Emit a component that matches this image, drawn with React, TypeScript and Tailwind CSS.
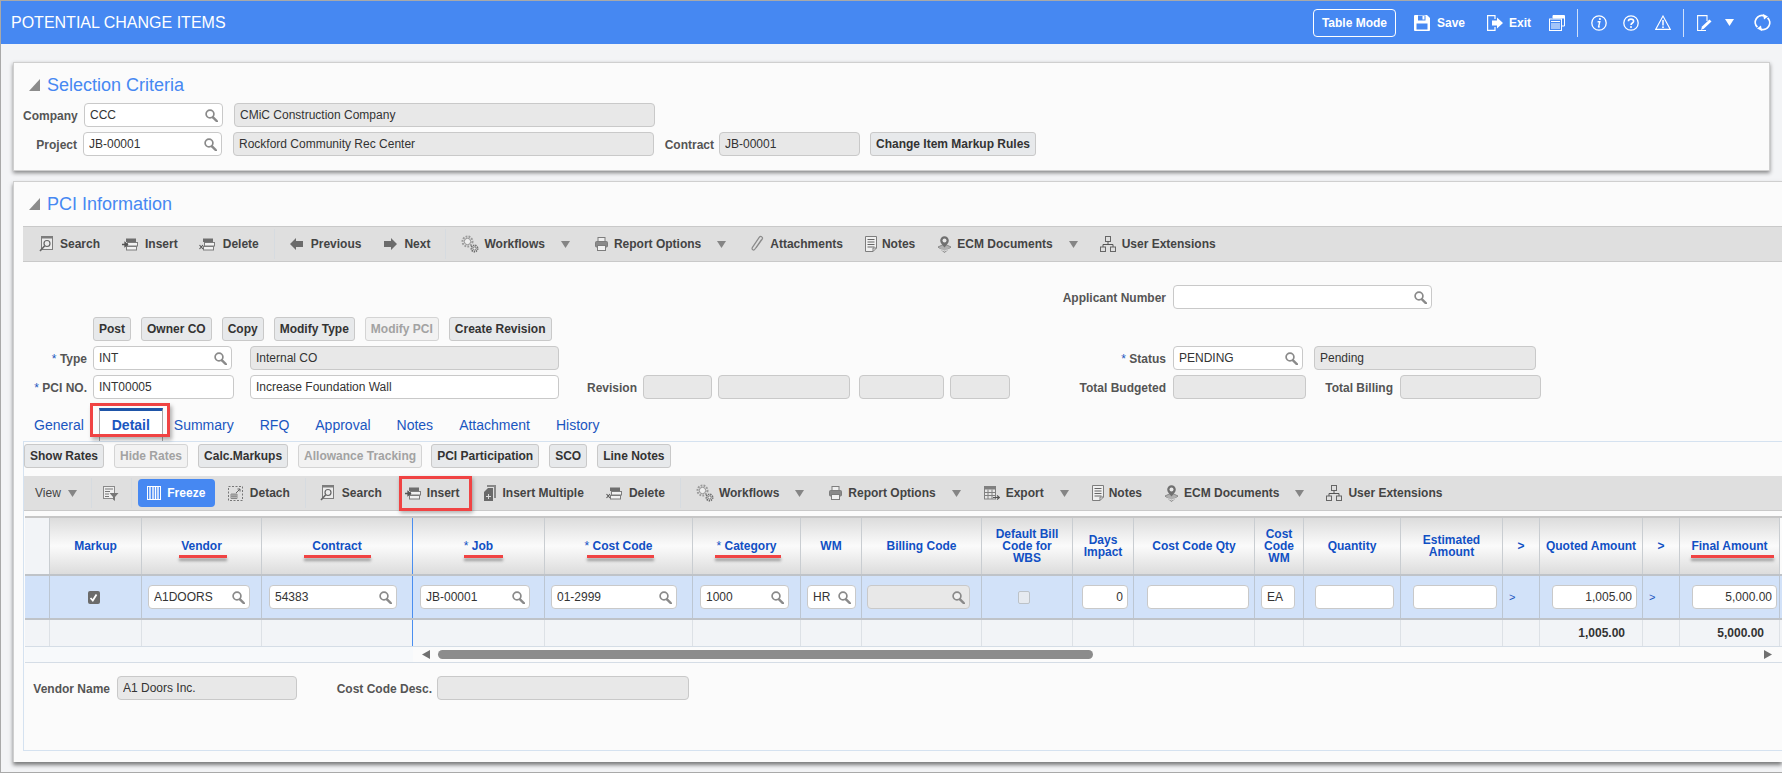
import type { ReactNode } from "react";

const GRID =
  "grid grid-cols-[25px_92px_120px_151px_132px_148px_108px_61px_120px_91px_61px_121px_49px_97px_102px_37px_103px_37px_100px]";

const GRAY = "#7d7d7d";

function Magnifier() {
  return (
    <svg width="13" height="13" viewBox="0 0 13 13" fill="none" className="shrink-0">
      <circle cx="5" cy="5" r="3.9" stroke="#8a8a8a" strokeWidth="1.7" fill="#ffffff" fillOpacity="0.4" />
      <path d="M8 8.3 L12 12.3" stroke="#8a8a8a" strokeWidth="2.4" strokeLinecap="round" />
    </svg>
  );
}

function DownArrow({ color = "#858585", className = "" }: { color?: string; className?: string }) {
  return (
    <svg width="9" height="7" viewBox="0 0 9 7" className={`shrink-0 ${className}`}>
      <polygon points="0,0 9,0 4.5,7" fill={color} />
    </svg>
  );
}

function SearchDocIcon() {
  return (
    <svg width="14" height="16" viewBox="0 0 14 16" fill="none" className="shrink-0">
      <rect x="2.5" y="0.5" width="11" height="13" fill="#ececec" stroke={GRAY} />
      <rect x="2.5" y="0.5" width="11" height="2" fill={GRAY} />
      <circle cx="8" cy="7.5" r="3" stroke="#666" strokeWidth="1.2" />
      <path d="M5.7 9.8 L1 15" stroke="#666" strokeWidth="1.6" />
    </svg>
  );
}

function RowsIcon({ kind }: { kind: "insert" | "delete" }) {
  return (
    <svg width="16" height="13" viewBox="0 0 16 13" fill="none" className="shrink-0">
      <rect x="4" y="0.5" width="10" height="3.5" fill="#6e6e6e" />
      <rect x="5.5" y="4.5" width="10" height="3.5" fill="#f2f2f2" stroke={GRAY} />
      <rect x="4.5" y="8.5" width="10" height="3.5" fill="#f2f2f2" stroke={GRAY} />
      {kind === "insert" ? (
        <path d="M0 6.5 H4 M3 4.5 L5.5 6.5 L3 8.5 Z" stroke="#555" strokeWidth="1.3" fill="#555" />
      ) : (
        <path d="M0.5 7 L4 11 M4 7 L0.5 11" stroke="#555" strokeWidth="1.1" />
      )}
    </svg>
  );
}

function BlockArrow({ dir }: { dir: "left" | "right" }) {
  return (
    <svg width="13" height="12" viewBox="0 0 13 12" className="shrink-0">
      <polygon
        points={dir === "left" ? "0,6 6,0 6,3 13,3 13,9 6,9 6,12" : "13,6 7,0 7,3 0,3 0,9 7,9 7,12"}
        fill="#6b6b6b"
      />
    </svg>
  );
}

function GearsIcon() {
  return (
    <svg width="18" height="18" viewBox="0 0 18 18" fill="none" className="shrink-0">
      <circle cx="6.5" cy="6.5" r="5" stroke="#9a9a9a" strokeWidth="2" strokeDasharray="1.8 1.2" />
      <circle cx="6.5" cy="6.5" r="3.2" stroke="#8a8a8a" strokeWidth="0.9" fill="#eee" />
      <circle cx="13.5" cy="13.5" r="3.2" stroke="#666" strokeWidth="1.6" strokeDasharray="1.3 0.9" />
      <circle cx="13.5" cy="13.5" r="1.6" stroke="#666" strokeWidth="0.8" fill="#eee" />
    </svg>
  );
}

function PrinterIcon() {
  return (
    <svg width="13" height="14" viewBox="0 0 13 14" fill="none" className="shrink-0">
      <rect x="3" y="0.5" width="7" height="4" fill="#eee" stroke={GRAY} />
      <rect x="0.5" y="4.5" width="12" height="5.5" rx="1" fill="#8a8a8a" stroke={GRAY} />
      <rect x="2.5" y="8.5" width="8" height="5" fill="#f2f2f2" stroke={GRAY} />
    </svg>
  );
}

function ClipIcon() {
  return (
    <svg width="14" height="18" viewBox="0 0 14 18" fill="none" className="shrink-0">
      <path
        d="M11.5 4.5 L5 14 C3.8 16 1.2 14.6 2.3 12.6 L9.2 2.4 C10.6 0.4 13.4 2 12.2 4.2 L6 13"
        stroke="#8a8a8a"
        strokeWidth="1.2"
      />
    </svg>
  );
}

function NoteIcon() {
  return (
    <svg width="12" height="16" viewBox="0 0 12 16" fill="none" className="shrink-0">
      <path d="M0.5 0.5 H11.5 V12 L8 15.5 H0.5 Z" fill="#f0f0f0" stroke={GRAY} />
      <path d="M2.5 3.5 H9.5 M2.5 6 H9.5 M2.5 8.5 H9.5 M2.5 11 H9.5" stroke="#666" />
      <path d="M8 15.5 V12 H11.5" stroke={GRAY} />
    </svg>
  );
}

function EcmIcon() {
  return (
    <svg width="15" height="17" viewBox="0 0 15 17" fill="none" className="shrink-0">
      <path d="M1 11 L7.5 8 L14 11 L7.5 16.5 Z" fill="#b0b0b0" stroke="#8a8a8a" />
      <path d="M2 13 L7.5 15 L13 13" stroke="#ddd" />
      <path d="M7.5 11.5 C5 8.5 3.2 7 3.2 4.6 A4.3 4.3 0 0 1 11.8 4.6 C11.8 7 10 8.5 7.5 11.5 Z" fill="#707070" />
      <circle cx="7.5" cy="4.6" r="2" fill="#e8e8e8" />
    </svg>
  );
}

function TreeIcon() {
  return (
    <svg width="16" height="16" viewBox="0 0 16 16" fill="none" className="shrink-0">
      <rect x="5.5" y="0.5" width="5" height="5" stroke="#666" />
      <path d="M8 5.5 V8.5 M3 11 V8.5 H13 V11" stroke="#555" />
      <rect x="0.5" y="11" width="5" height="4.5" stroke="#666" />
      <rect x="10.5" y="11" width="5" height="4.5" stroke="#666" />
    </svg>
  );
}

function FilterListIcon() {
  return (
    <svg width="16" height="15" viewBox="0 0 16 15" fill="none" className="shrink-0">
      <rect x="0.5" y="0.5" width="11" height="12" fill="#efefef" stroke="#8a8a8a" />
      <path d="M2 3 H10 M2 5.5 H7 M2 8 H6 M2 10.5 H6" stroke="#777" strokeWidth="1.2" />
      <polygon points="6.5,7 15.5,7 12,11 12,15 10,13.5 10,11" fill="#777" />
    </svg>
  );
}

function FreezeIcon() {
  return (
    <svg width="14" height="14" viewBox="0 0 14 14" fill="none" className="shrink-0">
      <rect x="0.5" y="0.5" width="13" height="13" stroke="#fff" />
      <path d="M3 1 V13 M6 1 V13 M8.5 1 V13 M11 1 V13" stroke="#fff" strokeWidth="1.4" />
    </svg>
  );
}

function DetachIcon() {
  return (
    <svg width="15" height="15" viewBox="0 0 15 15" fill="none" className="shrink-0">
      <rect x="0.5" y="0.5" width="14" height="14" stroke="#777" strokeDasharray="2 1.5" />
      <path d="M3 8 H9 V12.5 H3 Z M3 10.2 H9 M5 8 V12.5 M7 8 V12.5" stroke="#777" strokeWidth="0.8" />
      <path d="M8 7 L12 3 M9.5 3 H12 V5.5" stroke="#666" />
    </svg>
  );
}

function MultiDocIcon() {
  return (
    <svg width="12" height="16" viewBox="0 0 12 16" className="shrink-0">
      <path d="M3 0 H12 V13 H10 V2 H3 Z" fill="#888" />
      <path d="M4 3 H9 V16 H0 V7 Z" fill="#6a6a6a" />
      <path d="M4.5 9 V14 M2 11.5 H7" stroke="#ddd" />
    </svg>
  );
}

function ExportIcon() {
  return (
    <svg width="16" height="15" viewBox="0 0 16 15" fill="none" className="shrink-0">
      <rect x="0.5" y="0.5" width="11" height="12.5" fill="#e6e6e6" stroke="#808080" />
      <rect x="0.5" y="0.5" width="11" height="3" fill="#808080" />
      <path d="M0.5 6.5 H11.5 M0.5 9.5 H11.5 M4 3.5 V13 M8 3.5 V13" stroke="#808080" />
      <path d="M9 11.5 H15 M13 9.5 L15.5 11.5 L13 13.5" stroke="#555" strokeWidth="1.2" />
    </svg>
  );
}

function SaveIcon() {
  return (
    <svg width="16" height="16" viewBox="0 0 16 16" className="shrink-0">
      <path d="M0 1 Q0 0 1 0 H13 L16 3 V15 Q16 16 15 16 H1 Q0 16 0 15 Z" fill="#fff" />
      <rect x="4" y="0.5" width="7.5" height="5" fill="#4688f2" />
      <rect x="8.5" y="1" width="2" height="3.5" fill="#fff" />
      <rect x="2.5" y="8.5" width="11" height="6" fill="#4688f2" />
    </svg>
  );
}

function ExitIcon() {
  return (
    <svg width="16" height="16" viewBox="0 0 16 16" fill="none" className="shrink-0">
      <path d="M8 4 V0.6 H0.6 V15.4 H8 V12" stroke="#fff" strokeWidth="1.2" />
      <polygon points="5,5.5 10,5.5 10,2.5 16,8 10,13.5 10,10.5 5,10.5" fill="#fff" />
    </svg>
  );
}

function PagesIcon() {
  return (
    <svg width="16" height="16" viewBox="0 0 16 16" fill="none" className="shrink-0">
      <path d="M4 3 V0.5 H15.5 V11 H13" stroke="#fff" />
      <rect x="4" y="1" width="11" height="2.5" fill="#fff" />
      <rect x="0.5" y="4" width="12" height="11.5" fill="#4688f2" stroke="#fff" />
      <path d="M2 6.5 H11 M2 9 H11 M2 11 H11 M2 13 H11" stroke="#fff" strokeWidth="1.1" />
    </svg>
  );
}

function InfoIcon() {
  return (
    <svg width="16" height="16" viewBox="0 0 16 16" fill="none" className="shrink-0">
      <circle cx="8" cy="8" r="7.2" stroke="#fff" strokeWidth="1.3" />
      <circle cx="8.9" cy="4" r="1.1" fill="#fff" />
      <path d="M6.6 6.8 H8.8 L7.6 11.6 Q7.4 12.4 8.8 11.6" stroke="#fff" strokeWidth="1.4" />
    </svg>
  );
}

function HelpIcon() {
  return (
    <svg width="16" height="16" viewBox="0 0 16 16" fill="none" className="shrink-0">
      <circle cx="8" cy="8" r="7.2" stroke="#fff" strokeWidth="1.3" />
      <path d="M5.4 6.2 C5.4 3.4 10.6 3.4 10.6 6.2 C10.6 8 8 8 8 10" stroke="#fff" strokeWidth="1.6" />
      <circle cx="8" cy="12" r="1" fill="#fff" />
    </svg>
  );
}

function WarningIcon() {
  return (
    <svg width="16" height="15" viewBox="0 0 16 15" fill="none" className="shrink-0">
      <path d="M8 1 L15.3 14.4 H0.7 Z" stroke="#fff" strokeWidth="1.1" />
      <path d="M8 5 V10.5" stroke="#fff" strokeWidth="1.5" />
      <circle cx="8" cy="12.2" r="0.9" fill="#fff" />
    </svg>
  );
}

function EditIcon() {
  return (
    <svg width="15" height="16" viewBox="0 0 15 16" fill="none" className="shrink-0">
      <path d="M9 15.5 H0.6 V0.6 H10 V6" stroke="#fff" strokeWidth="1.1" />
      <path d="M4 15 L5 11.5 L12.5 4.5 L14.5 6.5 L7 13.5 Z" fill="#fff" />
    </svg>
  );
}

function RefreshIcon() {
  return (
    <svg width="17" height="17" viewBox="0 0 17 17" fill="none" className="shrink-0">
      <path d="M3.4 13.2 A6.8 6.8 0 0 1 10.5 1.9" stroke="#fff" strokeWidth="1.8" />
      <path d="M13.6 3.8 A6.8 6.8 0 0 1 6.5 15.1" stroke="#fff" strokeWidth="1.8" />
      <polygon points="9,0 14,2.4 10,5.4" fill="#fff" />
      <polygon points="8,17 3,14.6 7,11.6" fill="#fff" />
    </svg>
  );
}

function Triangle() {
  return (
    <svg width="11" height="12" viewBox="0 0 11 12" className="shrink-0">
      <polygon points="11,0 11,12 0,12" fill="#8c8c8c" />
    </svg>
  );
}

function Field({
  value = "",
  className = "",
  search,
  readOnly,
  right,
}: {
  value?: string;
  className?: string;
  search?: boolean;
  readOnly?: boolean;
  right?: boolean;
}) {
  return (
    <div
      className={`flex h-6 shrink-0 items-center rounded-[4px] border border-[#c9c9c9] pl-[5px] pr-[4px] text-xs text-[#333] ${
        readOnly ? "bg-[#e8e8e8]" : "bg-white"
      } ${className}`}
    >
      <span className={`flex-1 truncate ${right ? "text-right" : ""}`}>{value}</span>
      {search && <Magnifier />}
    </div>
  );
}

function Label({ children, className = "" }: { children: ReactNode; className?: string }) {
  return (
    <span className={`shrink-0 pt-[2px] text-right text-xs font-bold text-[#555] ${className}`}>{children}</span>
  );
}

function Req() {
  return <span className="font-normal text-[#1a56c0]">* </span>;
}

function Btn({ children, disabled, className = "" }: { children: ReactNode; disabled?: boolean; className?: string }) {
  return (
    <button
      type="button"
      className={`h-6 shrink-0 whitespace-nowrap rounded-[3px] border px-[5px] text-xs font-bold ${
        disabled ? "border-[#d4d4d4] bg-[#f2f2f2] text-[#a2a2a2]" : "border-[#c9c9c9] bg-[#e7e9eb] text-[#333]"
      } ${className}`}
    >
      {children}
    </button>
  );
}

function Tool({
  icon,
  label,
  className = "",
  gap = "gap-[7px]",
}: {
  icon: ReactNode;
  label: string;
  className?: string;
  gap?: string;
}) {
  return (
    <div className={`flex shrink-0 items-center text-xs font-bold text-[#444] ${gap} ${className}`}>
      {icon}
      <span>{label}</span>
    </div>
  );
}

function ToolSep({ className = "" }: { className?: string }) {
  return <div className={`h-[30px] w-px shrink-0 bg-[#d6dbe0] ${className}`} />;
}

type Col = {
  head: ReactNode;
  underline?: string;
  cell?: ReactNode;
  total?: ReactNode;
};

const COLUMNS: Col[] = [
  { head: "" },
  {
    head: "Markup",
    cell: (
      <div className="mx-auto flex h-[13px] w-3 -translate-x-[2px] items-center justify-center rounded-[2px] bg-[#6b6b6b]">
        <svg width="9" height="9" viewBox="0 0 9 9" fill="none">
          <path d="M1.5 5 L3.8 7.5 L7.5 1.5" stroke="#fff" strokeWidth="1.8" />
        </svg>
      </div>
    ),
  },
  {
    head: "Vendor",
    underline: "left-[37px] w-[48px]",
    cell: <Field value="A1DOORS" search className="ml-[6px] w-[102px]" />,
  },
  {
    head: "Contract",
    underline: "left-[42px] w-[67px]",
    cell: <Field value="54383" search className="ml-[7px] w-[128px]" />,
  },
  {
    head: <><span className="font-normal">* </span>Job</>,
    underline: "left-[51px] w-[39px]",
    cell: <Field value="JB-00001" search className="ml-[7px] w-[110px]" />,
  },
  {
    head: <><span className="font-normal">* </span>Cost Code</>,
    underline: "left-[42px] w-[67px]",
    cell: <Field value="01-2999" search className="ml-[6px] w-[126px]" />,
  },
  {
    head: <><span className="font-normal">* </span>Category</>,
    underline: "left-[22px] w-[66px]",
    cell: <Field value="1000" search className="ml-[7px] w-[89px]" />,
  },
  { head: "WM", cell: <Field value="HR" search className="ml-[6px] w-[49px]" /> },
  { head: "Billing Code", cell: <Field readOnly search className="ml-[5px] w-[103px]" /> },
  {
    head: <>Default Bill<br />Code for<br />WBS</>,
    cell: <div className="ml-[36px] h-[13px] w-3 rounded-[2px] border border-[#bcc2c8] bg-[#e6eaf0]" />,
  },
  { head: <>Days<br />Impact</>, cell: <Field value="0" right className="ml-[9px] w-[46px]" /> },
  { head: "Cost Code Qty", cell: <Field className="ml-[13px] w-[102px]" /> },
  { head: <>Cost<br />Code<br />WM</>, cell: <Field value="EA" className="ml-[6px] w-[34px]" /> },
  { head: "Quantity", cell: <Field className="ml-[11px] w-[79px]" /> },
  { head: <>Estimated<br />Amount</>, cell: <Field className="ml-[12px] w-[84px]" /> },
  { head: ">", cell: <span className="ml-[6px] text-[11px] text-[#1a56c0]">&gt;</span> },
  {
    head: "Quoted Amount",
    cell: <Field value="1,005.00" right className="ml-[12px] w-[85px]" />,
    total: <span className="pr-[17px]">1,005.00</span>,
  },
  { head: ">", cell: <span className="ml-[6px] text-[11px] text-[#1a56c0]">&gt;</span> },
  {
    head: "Final Amount",
    underline: "left-[11px] w-[83px]",
    cell: <Field value="5,000.00" right className="ml-[12px] w-[85px]" />,
    total: <span className="pr-[15px]">5,000.00</span>,
  },
];

const TABS_AFTER = [
  { label: "Summary", className: "ml-[11px]" },
  { label: "RFQ", className: "ml-[26px]" },
  { label: "Approval", className: "ml-[26px]" },
  { label: "Notes", className: "ml-[26px]" },
  { label: "Attachment", className: "ml-[26px]" },
  { label: "History", className: "ml-[26px]" },
];

export default function App() {
  return (
    <div className="flex h-[773px] w-full flex-col overflow-hidden border-b border-l border-t border-[#a9a9a9] bg-[#f3f4f6] font-['Liberation_Sans',Arial,sans-serif]">
      <header className="flex h-[43px] shrink-0 items-center bg-[#4688f2] pr-[11px] text-white">
        <h1 className="ml-[10px] text-base font-normal">POTENTIAL CHANGE ITEMS</h1>
        <div className="ml-auto flex items-center text-xs font-bold">
          <button type="button" className="mr-[18px] h-7 w-[83px] rounded-[4px] border border-white font-bold">
            Table Mode
          </button>
          <SaveIcon />
          <span className="ml-[7px]">Save</span>
          <span className="ml-[22px]"><ExitIcon /></span>
          <span className="ml-[6px]">Exit</span>
          <span className="ml-[18px]"><PagesIcon /></span>
          <div className="ml-[12px] h-7 w-px bg-[#cfe0fb]" />
          <span className="ml-[13px]"><InfoIcon /></span>
          <span className="ml-[16px]"><HelpIcon /></span>
          <span className="ml-[16px]"><WarningIcon /></span>
          <div className="ml-[12px] h-7 w-px bg-[#cfe0fb]" />
          <span className="ml-[13px]"><EditIcon /></span>
          <DownArrow color="#fff" className="ml-[13px]" />
          <span className="ml-[20px]"><RefreshIcon /></span>
        </div>
      </header>

      <section className="ml-3 mr-[12px] mt-[18px] h-[109px] shrink-0 border border-[#cfcfcf] bg-[#fbfbfb] pl-[9px] shadow-[0_2px_4px_rgba(0,0,0,0.45)]">
        <div className="flex h-[40px] items-center gap-[7px] pl-[6px] pt-[3px]">
          <Triangle />
          <h2 className="text-lg font-normal text-[#4688f2]">Selection Criteria</h2>
        </div>
        <div className="flex items-center">
          <Label className="w-[54px]">Company</Label>
          <Field value="CCC" search className="ml-[7px] w-[139px]" />
          <Field value="CMiC Construction Company" readOnly className="ml-[11px] w-[421px]" />
        </div>
        <div className="mt-[5px] flex items-center">
          <Label className="w-[54px]">Project</Label>
          <Field value="JB-00001" search className="ml-[6px] w-[139px]" />
          <Field value="Rockford Community Rec Center" readOnly className="ml-[11px] w-[421px]" />
          <Label className="w-[60px]">Contract</Label>
          <Field value="JB-00001" readOnly className="ml-[5px] w-[141px]" />
          <Btn className="ml-[10px]">Change Item Markup Rules</Btn>
        </div>
      </section>

      <section className="ml-3 mt-[10px] h-[581px] shrink-0 border-l border-t border-[#cfcfcf] bg-[#fbfbfb] pl-[9px] shadow-[0_3px_4px_rgba(0,0,0,0.5)]">
        <div className="flex h-[44px] items-center gap-[7px] pl-[6px]">
          <Triangle />
          <h2 className="text-lg font-normal text-[#4688f2]">PCI Information</h2>
        </div>

        <div className="flex h-[36px] items-center border-b border-t border-[#c9c9c9] bg-[#dfdfdf]">
          <Tool icon={<SearchDocIcon />} label="Search" className="ml-[16px]" />
          <Tool icon={<RowsIcon kind="insert" />} label="Insert" className="ml-[22px]" />
          <Tool icon={<RowsIcon kind="delete" />} label="Delete" className="ml-[21px]" gap="gap-[8px]" />
          <ToolSep className="ml-[15px]" />
          <Tool icon={<BlockArrow dir="left" />} label="Previous" className="ml-[15px]" gap="gap-[8px]" />
          <Tool icon={<BlockArrow dir="right" />} label="Next" className="ml-[23px]" gap="gap-[7px]" />
          <ToolSep className="ml-[15px]" />
          <Tool icon={<GearsIcon />} label="Workflows" className="ml-[15px]" gap="gap-[5px]" />
          <DownArrow className="ml-[16px]" />
          <Tool icon={<PrinterIcon />} label="Report Options" className="ml-[25px]" gap="gap-[6px]" />
          <DownArrow className="ml-[16px]" />
          <Tool icon={<ClipIcon />} label="Attachments" className="ml-[24px]" gap="gap-[6px]" />
          <Tool icon={<NoteIcon />} label="Notes" className="ml-[22px]" gap="gap-[5px]" />
          <Tool icon={<EcmIcon />} label="ECM Documents" className="ml-[22px]" gap="gap-[5px]" />
          <DownArrow className="ml-[16px]" />
          <Tool icon={<TreeIcon />} label="User Extensions" className="ml-[22px]" gap="gap-[6px]" />
        </div>

        <div className="mt-[23px] flex items-center">
          <Label className="ml-[1023px] w-[120px]">Applicant Number</Label>
          <Field search className="ml-[7px] w-[259px]" />
        </div>
        <div className="mt-[8px] flex items-center pl-[70px]">
          <Btn>Post</Btn>
          <Btn className="ml-[10px]">Owner CO</Btn>
          <Btn className="ml-[10px]">Copy</Btn>
          <Btn className="ml-[10px]">Modify Type</Btn>
          <Btn disabled className="ml-[10px]">Modify PCI</Btn>
          <Btn className="ml-[10px]">Create Revision</Btn>
        </div>
        <div className="mt-[5px] flex items-center">
          <Label className="w-[64px]"><Req />Type</Label>
          <Field value="INT" search className="ml-[6px] w-[139px]" />
          <Field value="Internal CO" readOnly className="ml-[18px] w-[309px]" />
          <Label className="w-[607px]"><Req />Status</Label>
          <Field value="PENDING" search className="ml-[7px] w-[130px]" />
          <Field value="Pending" readOnly className="ml-[11px] w-[222px]" />
        </div>
        <div className="mt-[5px] flex items-center">
          <Label className="w-[64px]"><Req />PCI NO.</Label>
          <Field value="INT00005" className="ml-[6px] w-[141px]" />
          <Field value="Increase Foundation Wall" className="ml-[16px] w-[309px]" />
          <Label className="w-[78px]">Revision</Label>
          <Field readOnly className="ml-[6px] w-[69px]" />
          <Field readOnly className="ml-[6px] w-[132px]" />
          <Field readOnly className="ml-[9px] w-[85px]" />
          <Field readOnly className="ml-[6px] w-[60px]" />
          <Label className="w-[156px]">Total Budgeted</Label>
          <Field readOnly className="ml-[7px] w-[133px]" />
          <Label className="w-[87px]">Total Billing</Label>
          <Field readOnly className="ml-[7px] w-[141px]" />
        </div>

        <div className="mt-[9px] flex h-[33px] items-center pt-[1px] text-sm text-[#1a56c0]">
          <span className="ml-[11px]">General</span>
          <div className="relative ml-[15px] flex h-[33px] w-[64px] items-center justify-center self-end border-x border-t-[3px] border-x-[#a8a8a8] border-t-[#1f55a8] bg-white pb-[3px] font-bold">
            Detail
            <span className="absolute -left-[10px] -right-[8px] -top-[8px] bottom-[4px] border-[3px] border-[#f04343] shadow-[2px_3px_4px_rgba(0,0,0,0.3)]" />
          </div>
          {TABS_AFTER.map((tab) => (
            <span key={tab.label} className={tab.className}>{tab.label}</span>
          ))}
        </div>

        <div className="h-[310px] border-y border-l border-[#d5e2f0]">
          <div className="mt-[2px] flex items-center">
            <Btn>Show Rates</Btn>
            <Btn disabled className="ml-[10px]">Hide Rates</Btn>
            <Btn className="ml-[10px]">Calc.Markups</Btn>
            <Btn disabled className="ml-[10px]">Allowance Tracking</Btn>
            <Btn className="ml-[9px]">PCI Participation</Btn>
            <Btn className="ml-[10px]">SCO</Btn>
            <Btn className="ml-[10px]">Line Notes</Btn>
          </div>

          <div className="mt-[8px] flex h-[35px] items-center border-b border-[#c9c9c9] bg-[#dfdfdf]">
            <span className="ml-[11px] text-xs text-[#444]">View</span>
            <DownArrow className="ml-[7px]" />
            <ToolSep className="ml-[14px]" />
            <span className="ml-[11px]"><FilterListIcon /></span>
            <ToolSep className="ml-[12px]" />
            <div className="ml-[6px] flex h-7 w-[77px] shrink-0 items-center justify-center gap-[6px] rounded-[4px] bg-[#4688f2] text-xs font-bold text-white">
              <FreezeIcon />
              <span>Freeze</span>
            </div>
            <Tool icon={<DetachIcon />} label="Detach" className="ml-[13px]" />
            <ToolSep className="ml-[15px]" />
            <Tool icon={<SearchDocIcon />} label="Search" className="ml-[14px]" gap="gap-[8px]" />
            <div className="relative ml-[23px] shrink-0">
              <Tool icon={<RowsIcon kind="insert" />} label="Insert" gap="gap-[6px]" />
              <span className="absolute -bottom-[10px] -left-[6px] -right-[12px] -top-[9px] border-[3px] border-[#f04343] shadow-[1px_2px_4px_rgba(0,0,0,0.3)]" />
            </div>
            <Tool icon={<MultiDocIcon />} label="Insert Multiple" className="ml-[24px]" />
            <Tool icon={<RowsIcon kind="delete" />} label="Delete" className="ml-[22px]" gap="gap-[7px]" />
            <ToolSep className="ml-[15px]" />
            <Tool icon={<GearsIcon />} label="Workflows" className="ml-[15px]" gap="gap-[5px]" />
            <DownArrow className="ml-[16px]" />
            <Tool icon={<PrinterIcon />} label="Report Options" className="ml-[25px]" gap="gap-[6px]" />
            <DownArrow className="ml-[16px]" />
            <Tool icon={<ExportIcon />} label="Export" className="ml-[23px]" gap="gap-[6px]" />
            <DownArrow className="ml-[16px]" />
            <Tool icon={<NoteIcon />} label="Notes" className="ml-[23px]" gap="gap-[5px]" />
            <Tool icon={<EcmIcon />} label="ECM Documents" className="ml-[22px]" gap="gap-[5px]" />
            <DownArrow className="ml-[16px]" />
            <Tool icon={<TreeIcon />} label="User Extensions" className="ml-[22px]" gap="gap-[6px]" />
          </div>

          <div className="ml-px mt-[5px]">
            <div className={`${GRID} h-[58px] border-t-2 border-[#c6c6c6]`}>
              {COLUMNS.map((col, i) => (
                <div
                  key={i}
                  className={`relative flex items-center justify-center border-r text-center text-xs font-bold leading-[12px] text-[#1150c4] ${
                    i === 3 ? "border-r-[#4a8ef0]" : "border-r-[#c9cdd1]"
                  } ${
                    i === 0
                      ? "bg-[#f2f4f7]"
                      : "bg-[linear-gradient(#dcdcdc,#fbfbfb_50%,#dcdcdc)]"
                  }`}
                >
                  <span>{col.head}</span>
                  {col.underline && (
                    <span
                      className={`absolute top-[37px] h-[3px] bg-[#f04343] shadow-[0_3px_3px_rgba(0,0,0,0.35)] ${col.underline}`}
                    />
                  )}
                </div>
              ))}
            </div>
            <div className={`${GRID} h-[46px] border-y-2 border-[#bfc3c8] bg-[#d2e2f9]`}>
              {COLUMNS.map((col, i) => (
                <div
                  key={i}
                  className={`flex items-center border-r ${i === 3 ? "border-r-[#4a8ef0]" : "border-r-[#bcc6d2]"}`}
                >
                  {col.cell}
                </div>
              ))}
            </div>
            <div className={`${GRID} h-[27px] border-b border-[#d5dde6] bg-[#f2f4f7]`}>
              {COLUMNS.map((col, i) => (
                <div
                  key={i}
                  className={`flex items-center justify-end border-r text-xs font-bold text-[#333] ${
                    i === 3 ? "border-r-[#4a8ef0]" : "border-r-[#dde1e6]"
                  }`}
                >
                  {col.total}
                </div>
              ))}
            </div>
            <div className="flex h-[16px] items-center border-b border-[#d5dde6]">
              <div className="h-full w-[388px] shrink-0 bg-[#f7f9fb]" />
              <svg width="8" height="9" viewBox="0 0 8 9" className="ml-[9px] shrink-0">
                <polygon points="0,4.5 8,0 8,9" fill="#707070" />
              </svg>
              <div className="ml-[8px] h-[9px] w-[655px] shrink-0 rounded-[5px] bg-[#8c8c8c]" />
              <svg width="8" height="9" viewBox="0 0 8 9" className="ml-[671px] shrink-0">
                <polygon points="8,4.5 0,0 0,9" fill="#707070" />
              </svg>
            </div>
          </div>

          <div className="mt-[13px] flex items-center">
            <Label className="ml-[9px] w-[77px]">Vendor Name</Label>
            <Field value="A1 Doors Inc." readOnly className="ml-[7px] w-[180px]" />
            <Label className="ml-[39px] w-[96px]">Cost Code Desc.</Label>
            <Field readOnly className="ml-[5px] w-[252px]" />
          </div>
        </div>
      </section>
    </div>
  );
}
